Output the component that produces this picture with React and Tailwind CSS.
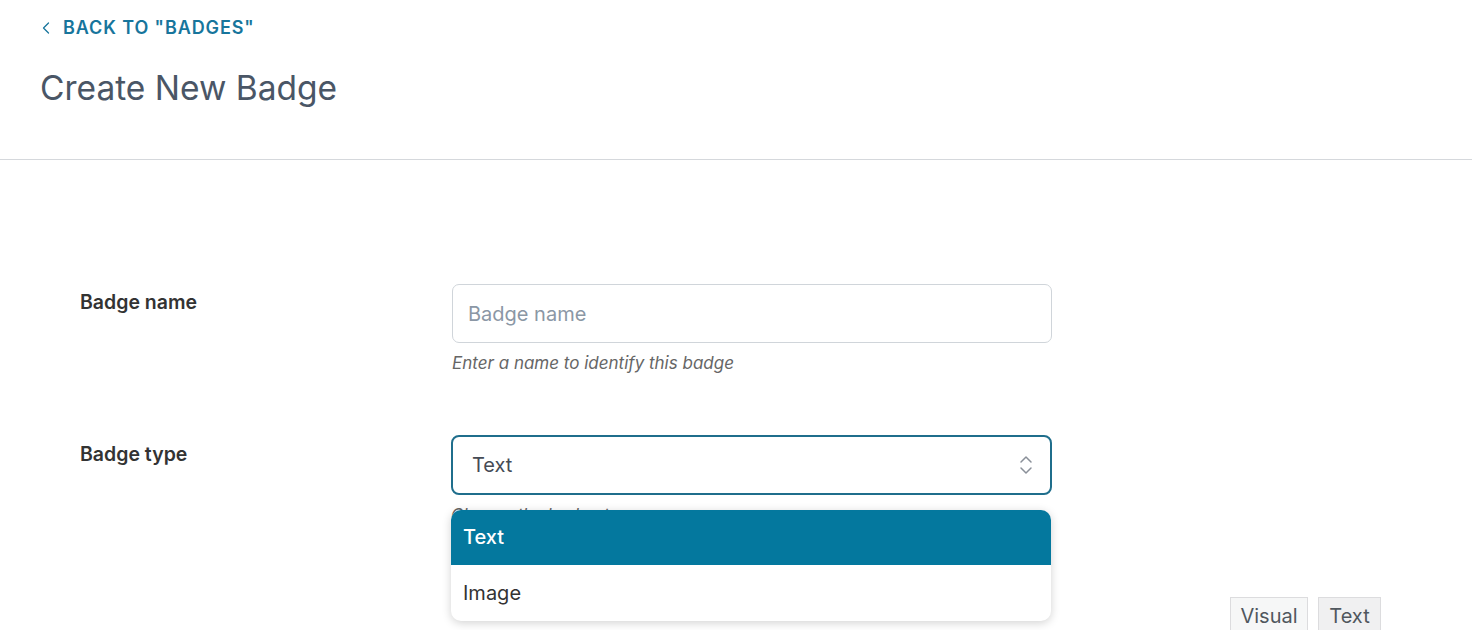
import { ChevronLeft } from 'lucide-react';

export default function App() {
  return (
    <div className="min-h-screen bg-white font-['Inter',_'Noto_Sans',_sans-serif] overflow-hidden">
      {/* Header */}
      <div className="px-10 pt-[14px] pb-[51px] border-b border-[#d5d8dc]">
        <a href="#" className="flex items-center gap-[7px] text-[#17759c] text-[18px] font-semibold tracking-[0.05em] uppercase">
          <ChevronLeft className="w-[20px] h-[20px] -ml-[4px]" strokeWidth={1.5} />
          Back to "Badges"
        </a>
        <h1 className="mt-[27px] text-[33.5px] leading-[40px] text-[#4a5666] font-normal">Create New Badge</h1>
      </div>

      {/* Form */}
      <div className="pl-[80px] pt-[124px]">
        <div className="flex">
          <label className="w-[372px] pt-[4px] text-[19.5px] font-semibold text-[#333]">Badge name</label>
          <div className="w-[600px]">
            <input
              type="text"
              placeholder="Badge name"
              className="w-full h-[59px] px-[15px] rounded-[7px] border border-[#d0d5da] text-[20px] text-[#333] placeholder:text-[#8b97a5] outline-none"
            />
            <p className="mt-[8px] text-[17px] italic text-[#666]">Enter a name to identify this badge</p>
          </div>
        </div>

        <div className="flex mt-[58px]">
          <label className="w-[371px] pt-[5px] text-[19.5px] font-semibold text-[#333]">Badge type</label>
          <div className="w-[601px] relative">
            <div className="w-full h-[60px] px-[19px] rounded-[8px] border-2 border-[#1f6e8c] flex items-center justify-between text-[20px] text-[#454b55]">
              <span>Text</span>
              <svg width="14" height="22" viewBox="0 0 14 22" fill="none" stroke="#8a9099" strokeWidth="1.5" strokeLinecap="round" strokeLinejoin="round" className="-mr-[2px]">
                <path d="M2 8 L7 3 L12 8" />
                <path d="M2 14 L7 19 L12 14" />
              </svg>
            </div>
            <p className="mt-[8px] text-[17px] italic text-[#666]">Choose the badge type</p>

            <div className="absolute left-0 top-[75px] w-[600px] bg-white rounded-[10px] shadow-[0_2px_10px_rgba(0,0,0,0.18)] overflow-hidden">
              <div className="h-[55px] px-[12px] flex items-center bg-[#04789e] text-white text-[20px] font-medium">Text</div>
              <div className="h-[56px] px-[12px] flex items-center text-[#333] text-[20px]">Image</div>
            </div>
          </div>
        </div>

        <div className="flex justify-end gap-[10px] pr-[91px] mt-[69px]">
          <button className="h-[44px] w-[78px] pb-[6px] border border-[#dcdcde] bg-[#f6f7f7] text-[20px] text-[#50575e]">Visual</button>
          <button className="h-[44px] w-[63px] pb-[6px] border border-[#dcdcde] bg-[#f0f0f1] text-[20px] text-[#50575e]">Text</button>
        </div>
      </div>
    </div>
  );
}
